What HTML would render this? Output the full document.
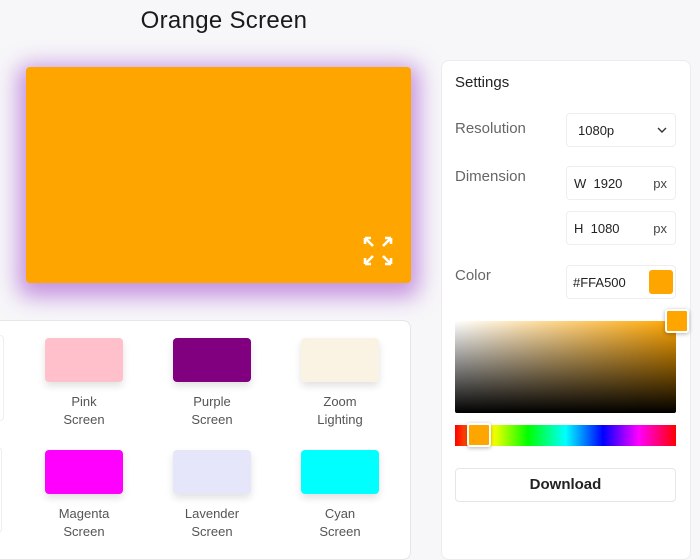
<!DOCTYPE html>
<html><head><style>
*{box-sizing:border-box;margin:0;padding:0}
body{width:700px;height:546px;overflow:hidden;background:#f7f7f9;font-family:"Liberation Sans",sans-serif;position:relative;color:#222}
.abs{position:absolute}
h1{position:absolute;left:0;width:448px;text-align:center;top:7px;font-size:24px;font-weight:normal;color:#1a1a1a;letter-spacing:.3px}
.screen{left:26px;top:67px;width:385px;height:216px;background:#FFA500;border-radius:4px;box-shadow:0 6px 22px 8px rgba(150,50,200,.5)}
.grid{left:-10px;top:320px;width:421px;height:240px;background:#fff;border:1px solid #e6e6ea;border-radius:8px}
.sw{position:absolute;width:78px;height:44px;border-radius:4px;box-shadow:0 4px 8px rgba(0,0,0,.12)}
.lb{position:absolute;width:120px;text-align:center;font-size:13px;line-height:18px;color:#555}
.panel{left:441px;top:60px;width:250px;height:500px;background:#fff;border:1px solid #ececf0;border-radius:8px}
.lab{position:absolute;left:455px;font-size:15px;color:#666}
.inp{position:absolute;left:566px;width:110px;height:34px;border:1px solid #eee;border-radius:4px;font-size:13px;color:#222}
.inp span{position:absolute;top:9px}
</style></head><body>
<h1>Orange Screen</h1>
<div class="abs screen">
<svg class="abs" style="left:337px;top:169px" width="30" height="30" viewBox="0 0 30 30" fill="none" stroke="#fff" stroke-width="2.6"><path d="M2 2L10 10M2 2h6M2 2v6M28 2L20 10M28 2h-6M28 2v6M2 28L10 20M2 28h6M2 28v-6M28 28L20 20M28 28h-6M28 28v-6"/></svg>
</div>
<div class="abs grid"></div>
<div class="abs" style="left:-20px;top:335px;width:24px;height:86px;border:1px solid #eee;border-radius:4px;background:#fff"></div>
<div class="abs" style="left:-20px;top:447px;width:22px;height:86px;border:1px solid #eee;border-radius:4px;background:#fff"></div>
<div class="sw" style="left:45px;top:338px;background:#FFC0CB"></div>
<div class="sw" style="left:173px;top:338px;background:#800080"></div>
<div class="sw" style="left:301px;top:338px;background:#FAF3E3"></div>
<div class="lb" style="left:24px;top:393px">Pink<br>Screen</div>
<div class="lb" style="left:152px;top:393px">Purple<br>Screen</div>
<div class="lb" style="left:280px;top:393px">Zoom<br>Lighting</div>
<div class="sw" style="left:45px;top:450px;background:#FF00FF"></div>
<div class="sw" style="left:173px;top:450px;background:#E6E6FA"></div>
<div class="sw" style="left:301px;top:450px;background:#00FFFF"></div>
<div class="lb" style="left:24px;top:505px">Magenta<br>Screen</div>
<div class="lb" style="left:152px;top:505px">Lavender<br>Screen</div>
<div class="lb" style="left:280px;top:505px">Cyan<br>Screen</div>

<div class="abs panel"></div>
<div class="abs" style="left:455px;top:74px;font-size:15px;color:#222">Settings</div>
<div class="lab" style="top:120px">Resolution</div>
<div class="inp" style="top:113px"><span style="left:11px">1080p</span><svg class="abs" style="right:8px;top:13px" width="10" height="7" viewBox="0 0 10 7"><path d="M1 1l4 4 4-4" stroke="#333" stroke-width="1.4" fill="none"/></svg></div>
<div class="lab" style="top:168px">Dimension</div>
<div class="inp" style="top:166px"><span style="left:7px">W&nbsp; 1920</span><span style="right:8px;color:#444">px</span></div>
<div class="inp" style="top:211px"><span style="left:7px">H&nbsp; 1080</span><span style="right:8px;color:#444">px</span></div>
<div class="lab" style="top:267px">Color</div>
<div class="inp" style="top:265px"><span style="left:6px">#FFA500</span><div class="abs" style="left:82px;top:4px;width:24px;height:24px;background:#FFA500;border-radius:3px"></div></div>
<div class="abs" style="left:455px;top:321px;width:221px;height:92px;border-radius:2px;background:linear-gradient(to top,#000,rgba(0,0,0,0)),linear-gradient(to right,#fff,#FFA500)"></div>
<div class="abs" style="left:665px;top:309px;width:24px;height:24px;background:#FFA500;border:2px solid #fff;border-radius:3px;box-shadow:0 1px 4px rgba(0,0,0,.3)"></div>
<div class="abs" style="left:455px;top:425px;width:221px;height:21px;background:linear-gradient(to right,#f00,#ff0 17%,#0f0 33%,#0ff 50%,#00f 67%,#f0f 83%,#f00)"></div>
<div class="abs" style="left:467px;top:423px;width:24px;height:24px;background:#FFA500;border:2px solid #fff;border-radius:3px;box-shadow:0 1px 4px rgba(0,0,0,.3)"></div>
<div class="abs" style="left:455px;top:468px;width:221px;height:34px;border:1px solid #e6e6e6;border-radius:4px;text-align:center;line-height:32px;font-size:15px;font-weight:bold;color:#222">Download</div>
</body></html>
